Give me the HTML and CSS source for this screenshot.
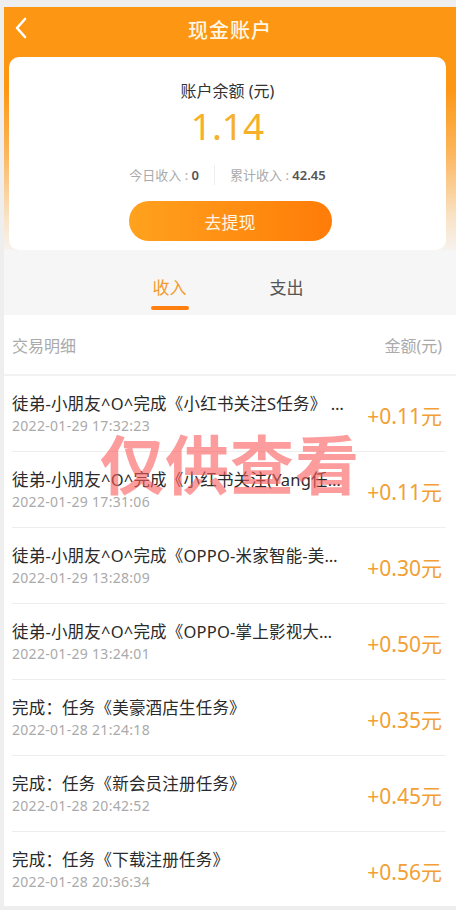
FILE: index.html
```html
<!DOCTYPE html>
<html lang="zh-CN">
<head>
  <meta charset="UTF-8">
  <meta name="viewport" content="width=device-width, initial-scale=1.0">
  <title>现金账户</title>
  <link rel="stylesheet" href="styles.css">
</head>
<body>
  <div class="page">
    <div class="top">
      <div class="nav">
        <svg class="back" width="14" height="22" viewBox="0 0 14 22">
          <path d="M11 2 L3 11 L11 20" fill="none" stroke="#fff" stroke-width="2.6" stroke-linecap="round" stroke-linejoin="round"/>
        </svg>
        <h1>现金账户</h1>
      </div>
      <div class="card">
        <div class="card-label">账户余额 (元)</div>
        <div class="balance">1.14</div>
        <div class="stats">
          <span class="stat">今日收入 : <b>0</b></span>
          <span class="divider"></span>
          <span class="stat">累计收入 : <b>42.45</b></span>
        </div>
        <button class="withdraw">去提现</button>
      </div>
    </div>

    <div class="tabs">
      <div class="tab active">收入</div>
      <div class="tab">支出</div>
    </div>

    <div class="list">
      <div class="list-head">
        <span>交易明细</span>
        <span>金额(元)</span>
      </div>
      <div class="item">
        <div class="info">
          <div class="title">徒弟-小朋友^O^完成《小红书关注S任务》 的徒弟奖励</div>
          <div class="date">2022-01-29 17:32:23</div>
        </div>
        <div class="amount">+0.11元</div>
      </div>
      <div class="item">
        <div class="info">
          <div class="title">徒弟-小朋友^O^完成《小红书关注(Yang任务)》的奖励</div>
          <div class="date">2022-01-29 17:31:06</div>
        </div>
        <div class="amount">+0.11元</div>
      </div>
      <div class="item">
        <div class="info">
          <div class="title">徒弟-小朋友^O^完成《OPPO-米家智能-美的任务》</div>
          <div class="date">2022-01-29 13:28:09</div>
        </div>
        <div class="amount">+0.30元</div>
      </div>
      <div class="item">
        <div class="info">
          <div class="title">徒弟-小朋友^O^完成《OPPO-掌上影视大全任务》</div>
          <div class="date">2022-01-29 13:24:01</div>
        </div>
        <div class="amount">+0.50元</div>
      </div>
      <div class="item">
        <div class="info">
          <div class="title">完成：任务《美豪酒店生任务》</div>
          <div class="date">2022-01-28 21:24:18</div>
        </div>
        <div class="amount">+0.35元</div>
      </div>
      <div class="item">
        <div class="info">
          <div class="title">完成：任务《新会员注册任务》</div>
          <div class="date">2022-01-28 20:42:52</div>
        </div>
        <div class="amount">+0.45元</div>
      </div>
      <div class="item">
        <div class="info">
          <div class="title">完成：任务《下载注册任务》</div>
          <div class="date">2022-01-28 20:36:34</div>
        </div>
        <div class="amount">+0.56元</div>
      </div>
    </div>

    <div class="watermark">仅供查看</div>
  </div>
</body>
</html>
```

FILE: styles.css
```css
* {
  box-sizing: border-box;
}
body {
  margin: 0;
  background-color: #eeeeee;
  font-family: "Noto Sans", "Noto Sans CJK SC", sans-serif;
  color: #333;
}
.page {
  position: relative;
  margin: 7px 0 0 4px;
  width: 452px;
  height: 899px;
  background-color: #fff;
  overflow: hidden;
}
.top {
  height: 243px;
  background: linear-gradient(180deg, #fd9612 0, #fd9612 80px, #fcb55a 145px, #f9e3c6 210px, #f6f2ee 243px);
}
.nav {
  position: relative;
  height: 50px;
  display: flex;
  align-items: center;
  justify-content: center;
}
.back {
  position: absolute;
  left: 10px;
  top: 10px;
}
h1 {
  margin: 0 0 6px;
  font-size: 20px;
  font-weight: 500;
  color: #fff6e6;
  letter-spacing: 1px;
}
.card {
  margin: 0 10px 0 5px;
  height: 193px;
  background-color: #fff;
  border-radius: 10px;
  display: flex;
  flex-direction: column;
  align-items: center;
  padding-top: 22px;
}
.card-label {
  font-size: 16px;
  line-height: 24px;
  color: #333;
}
.balance {
  font-size: 37px;
  line-height: 44px;
  color: #f6b02a;
  margin-top: 1px;
}
.stats {
  display: flex;
  align-items: center;
  margin-top: 17px;
  font-size: 13px;
  line-height: 20px;
  color: #aaa;
}
.stats b {
  color: #555;
  font-weight: 600;
}
.divider {
  width: 1px;
  height: 20px;
  background-color: #eee;
  margin: 0 15px;
}
.withdraw {
  margin-top: 16px;
  margin-left: 5px;
  width: 203px;
  height: 40px;
  border: none;
  border-radius: 20px;
  background: linear-gradient(90deg, #ffa21e, #ff7c08);
  color: #fff5e6;
  font-family: inherit;
  font-size: 17px;
}
.tabs {
  height: 65px;
  background-color: #f6f6f6;
  display: flex;
  justify-content: center;
  gap: 37px;
  padding-right: 4px;
}
.tab {
  width: 80px;
  text-align: center;
  font-size: 17px;
  color: #555;
  padding-top: 25px;
  line-height: 26px;
}
.tab.active {
  color: #f39a2e;
  position: relative;
}
.tab.active::after {
  content: "";
  position: absolute;
  left: 21px;
  top: 56px;
  width: 38px;
  height: 4px;
  border-radius: 2px;
  background-color: #ff7f0f;
}
.list-head {
  height: 61px;
  padding: 0 14px 0 8px;
  display: flex;
  justify-content: space-between;
  align-items: center;
  font-size: 16px;
  color: #aaa;
  border-bottom: 2px solid #f2f2f2;
}
.item {
  margin: 0 10px 0 8px;
  padding-right: 4px;
  height: 76px;
  display: flex;
  align-items: center;
  border-bottom: 1px solid #eee;
}
.info {
  flex: 1;
  min-width: 0;
  padding-top: 2px;
}
.title {
  font-size: 16.5px;
  line-height: 23px;
  letter-spacing: 0.2px;
  color: #2a2a2a;
  white-space: nowrap;
  overflow: hidden;
  text-overflow: ellipsis;
  max-width: 334px;
}
.date {
  font-size: 14px;
  line-height: 22px;
  letter-spacing: 0.3px;
  color: #aaa;
}
.amount {
  font-size: 21px;
  color: #f2a033;
  margin-left: 10px;
  padding-top: 3px;
  white-space: nowrap;
}
.watermark {
  position: absolute;
  left: 96px;
  top: 418px;
  font-size: 64px;
  font-weight: 700;
  line-height: 80px;
  color: rgba(252, 90, 90, 0.6);
  letter-spacing: 1px;
  pointer-events: none;
}
```
